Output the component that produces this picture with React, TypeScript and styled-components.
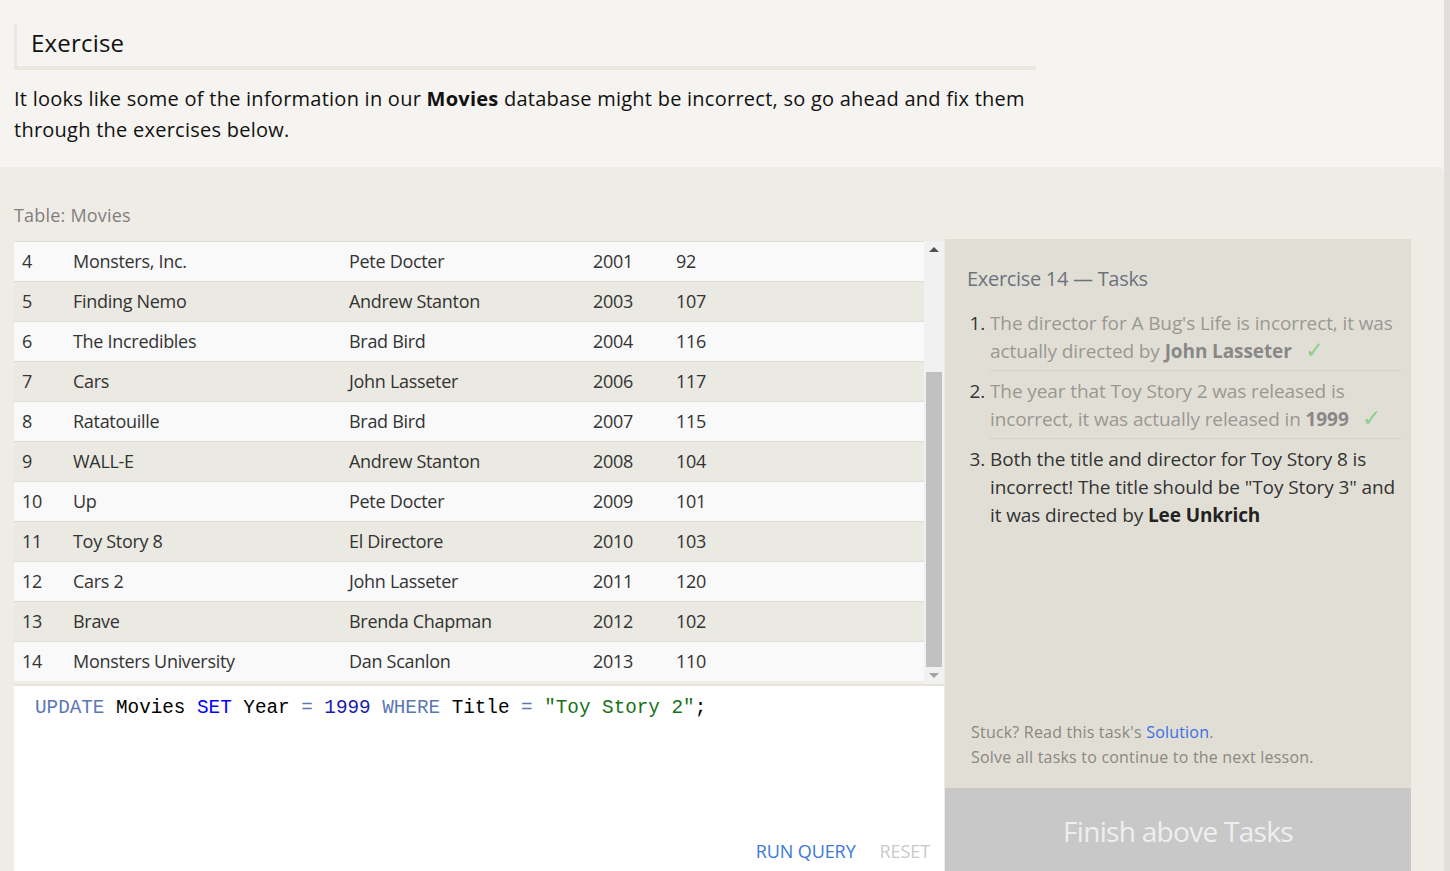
import React from "react";
import styled, { createGlobalStyle } from "styled-components";

const Global = createGlobalStyle`
  html, body { margin: 0; padding: 0; }
  body {
    background: #f5f4f0;
    font-family: "Open Sans", "Noto Sans", sans-serif;
    color: #111;
    overflow: hidden;
  }
`;

const Shell = styled.div`
  display: flex;
  width: 1450px;
  height: 871px;
  overflow: hidden;
`;

const Page = styled.div`
  flex: 1;
  display: flex;
  flex-direction: column;
  min-width: 0;
`;

const PageScroll = styled.div`
  width: 6px;
  background: #e2dedc;
`;

const Intro = styled.section`
  padding: 24px 0 22px 14px;
`;

const HeadingBox = styled.div`
  width: 1022px;
  height: 46px;
  box-sizing: border-box;
  padding: 0 0 5px 14px;
  border-left: 3px solid #e9e7de;
  border-bottom: 4px solid #e9e7de;
  display: flex;
  align-items: center;
`;

const Heading = styled.h1`
  margin: 0;
  font-size: 24px;
  font-weight: 400;
  color: #111;
  letter-spacing: 0.2px;
`;

const Lead = styled.p`
  margin: 13px 0 0;
  width: 1032px;
  font-size: 20px;
  line-height: 31px;
  letter-spacing: 0.25px;
  color: #111;
  b { font-weight: 700; }
`;

const Lower = styled.section`
  flex: 1;
  background: #efece5;
  border-top-right-radius: 6px;
  padding: 35px 0 0 14px;
  display: flex;
  flex-direction: column;
`;

const TableLabel = styled.div`
  font-size: 18px;
  line-height: 26px;
  color: #7f7f7f;
  letter-spacing: 0.2px;
  margin-bottom: 11px;
`;

const Workspace = styled.div`
  display: flex;
  align-items: flex-start;
`;

const LeftCol = styled.div`
  width: 930px;
  display: flex;
  flex-direction: column;
  margin-top: 2px;
`;

const TableWrap = styled.div`
  display: flex;
  height: 443px;
  border-bottom: 2px solid #e5e3dc;
`;

const Rows = styled.div`
  flex: 1;
  display: flex;
  flex-direction: column;
`;

const Row = styled.div<{ $alt: boolean }>`
  display: grid;
  grid-template-columns: 51px 276px 244px 83px 1fr;
  align-items: center;
  height: 40px;
  box-sizing: border-box;
  border-top: 1px solid #dfddd6;
  background: ${(p) => (p.$alt ? "#eae9e2" : "#f9f9f9")};
  padding: 0 0 1px 8px;
  font-size: 18px;
  color: #333;
  letter-spacing: -0.3px;
`;

const Cell = styled.span`
  white-space: nowrap;
`;

const ScrollBar = styled.div`
  width: 20px;
  background: #f1f1f1;
  display: flex;
  flex-direction: column;
  align-items: center;
`;

const Arrow = styled.div<{ $down?: boolean }>`
  height: 17px;
  width: 100%;
  display: flex;
  align-items: center;
  justify-content: center;
  &::before {
    content: "";
    width: 0;
    height: 0;
    border-left: 5px solid transparent;
    border-right: 5px solid transparent;
    ${(p) =>
      p.$down
        ? "border-top: 5px solid #a3a3a3;"
        : "border-bottom: 5px solid #505050;"}
  }
`;

const TrackSpace = styled.div`
  flex: 1;
`;

const Thumb = styled.div`
  width: 16px;
  height: 295px;
  background: #c1c1c1;
`;

const Editor = styled.div`
  background: #ffffff;
  height: 200px;
  box-sizing: border-box;
  padding: 10px 14px 0 21px;
  display: flex;
  flex-direction: column;
`;

const Code = styled.pre`
  margin: 0;
  font-family: "Liberation Mono", "DejaVu Sans Mono", monospace;
  font-size: 19.3px;
  line-height: 24px;
  color: #000;
  flex: 1;
`;

const Tok = styled.span<{ $c: string }>`
  color: ${(p) => p.$c};
`;

const Actions = styled.div`
  display: flex;
  justify-content: flex-end;
  gap: 24px;
  padding-bottom: 23px;
`;

const ActionBtn = styled.button<{ $muted?: boolean }>`
  background: none;
  border: none;
  padding: 0;
  font-family: "Open Sans", sans-serif;
  font-size: 18px;
  letter-spacing: -0.1px;
  color: ${(p) => (p.$muted ? "#c9c9c9" : "#3d78d8")};
  cursor: pointer;
`;

const RightCol = styled.aside`
  width: 466px;
  margin-left: 1px;
  display: flex;
  flex-direction: column;
`;

const TaskPanel = styled.div`
  background: #e1dfd5;
  height: 549px;
  box-sizing: border-box;
  padding: 26px 10px 18px 22px;
  display: flex;
  flex-direction: column;
`;

const TaskTitle = styled.h2`
  margin: 0;
  font-size: 20px;
  line-height: 28px;
  font-weight: 400;
  color: #6d737d;
  letter-spacing: -0.3px;
`;

const TaskList = styled.ol`
  margin: 10px 0 0;
  padding: 0 0 0 23px;
  flex: 1;
`;

const Task = styled.li<{ $done?: boolean }>`
  font-size: 19px;
  line-height: 28px;
  letter-spacing: -0.1px;
  color: ${(p) => (p.$done ? "#999893" : "#333")};
  padding: 6px 0 5px;
  border-bottom: ${(p) => (p.$done ? "1px solid #d3d1c8" : "none")};
  &::marker { color: #333; }
  b { color: ${(p) => (p.$done ? "#888" : "#222")}; }
`;

const Check = styled.span`
  color: #8ccf8c;
  margin-left: 13px;
  font-family: "DejaVu Sans", sans-serif;
  font-size: 23px;
  line-height: 20px;
  font-weight: 300;
`;

const Hint = styled.div`
  font-size: 16px;
  line-height: 25px;
  color: #8b8782;
  letter-spacing: 0.2px;
  padding-left: 4px;
  a { color: #3a6ee6; text-decoration: none; }
`;

const FinishBtn = styled.div`
  height: 88px;
  background: #c8c8c8;
  color: #efefef;
  font-size: 28px;
  display: flex;
  align-items: center;
  justify-content: center;
  letter-spacing: -0.7px;
  padding-bottom: 3px;
  box-sizing: border-box;
`;

const movies: [number, string, string, number, number][] = [
  [4, "Monsters, Inc.", "Pete Docter", 2001, 92],
  [5, "Finding Nemo", "Andrew Stanton", 2003, 107],
  [6, "The Incredibles", "Brad Bird", 2004, 116],
  [7, "Cars", "John Lasseter", 2006, 117],
  [8, "Ratatouille", "Brad Bird", 2007, 115],
  [9, "WALL-E", "Andrew Stanton", 2008, 104],
  [10, "Up", "Pete Docter", 2009, 101],
  [11, "Toy Story 8", "El Directore", 2010, 103],
  [12, "Cars 2", "John Lasseter", 2011, 120],
  [13, "Brave", "Brenda Chapman", 2012, 102],
  [14, "Monsters University", "Dan Scanlon", 2013, 110],
];

export default function App() {
  return (
    <>
      <Global />
      <Shell>
        <Page>
          <Intro>
            <HeadingBox>
              <Heading>Exercise</Heading>
            </HeadingBox>
            <Lead>
              It looks like some of the information in our <b>Movies</b> database might be
              incorrect, so go ahead and fix them through the exercises below.
            </Lead>
          </Intro>
          <Lower>
            <TableLabel>Table: Movies</TableLabel>
            <Workspace>
              <LeftCol>
                <TableWrap>
                  <Rows>
                    {movies.map((m, i) => (
                      <Row key={m[0]} $alt={i % 2 === 1}>
                        {m.map((v, j) => (
                          <Cell key={j}>{v}</Cell>
                        ))}
                      </Row>
                    ))}
                  </Rows>
                  <ScrollBar>
                    <Arrow />
                    <TrackSpace />
                    <Thumb />
                    <Arrow $down />
                  </ScrollBar>
                </TableWrap>
                <Editor>
                  <Code>
                    <Tok $c="#5a78b4">UPDATE</Tok> Movies <Tok $c="#0000ff">SET</Tok> Year{" "}
                    <Tok $c="#5a78b4">=</Tok> <Tok $c="#1a1ab0">1999</Tok>{" "}
                    <Tok $c="#5a78b4">WHERE</Tok> Title <Tok $c="#5a78b4">=</Tok>{" "}
                    <Tok $c="#187018">"Toy Story 2"</Tok>;
                  </Code>
                  <Actions>
                    <ActionBtn>RUN QUERY</ActionBtn>
                    <ActionBtn $muted>RESET</ActionBtn>
                  </Actions>
                </Editor>
              </LeftCol>
              <RightCol>
                <TaskPanel>
                  <TaskTitle>Exercise 14 — Tasks</TaskTitle>
                  <TaskList>
                    <Task $done>
                      The director for A Bug's Life is incorrect, it was actually directed by{" "}
                      <b>John Lasseter</b>
                      <Check>✓</Check>
                    </Task>
                    <Task $done>
                      The year that Toy Story 2 was released is incorrect, it was actually
                      released in <b>1999</b>
                      <Check>✓</Check>
                    </Task>
                    <Task>
                      Both the title and director for Toy Story 8 is incorrect! The title should
                      be "Toy Story 3" and it was directed by <b>Lee Unkrich</b>
                    </Task>
                  </TaskList>
                  <Hint>
                    Stuck? Read this task's <a href="#">Solution</a>.
                    <br />
                    Solve all tasks to continue to the next lesson.
                  </Hint>
                </TaskPanel>
                <FinishBtn>Finish above Tasks</FinishBtn>
              </RightCol>
            </Workspace>
          </Lower>
        </Page>
        <PageScroll />
      </Shell>
    </>
  );
}
